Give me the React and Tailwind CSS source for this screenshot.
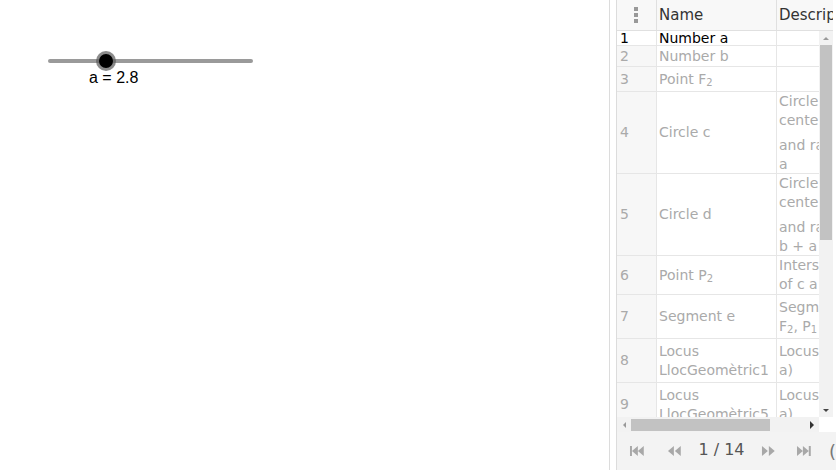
import React from "react";

const dim = "text-[#aaaaaa]";

const rows = [
  { n: "1", h: "h-[15px]", name: <span className="text-black">Number a</span>, desc: null, active: true },
  { n: "2", h: "h-[21px]", name: "Number b", desc: null },
  { n: "3", h: "h-[25px]", name: <>Point F<sub className="text-[10px]">2</sub></>, desc: null },
  {
    n: "4",
    h: "h-[82px]",
    name: "Circle c",
    desc: ["Circle", "cente", "and ra", "a"],
  },
  {
    n: "5",
    h: "h-[82px]",
    name: "Circle d",
    desc: ["Circle", "cente", "and ra", "b + a"],
  },
  { n: "6", h: "h-[39px]", name: <>Point P<sub className="text-[10px]">2</sub></>, desc: ["Inters", "of c a"] },
  {
    n: "7",
    h: "h-[44px]",
    name: "Segment e",
    desc: ["Segm", <>F<sub className="text-[10px]">2</sub>, P<sub className="text-[10px]">1</sub></>],
  },
  { n: "8", h: "h-[44px]", name: ["Locus", "LlocGeomètric1"], desc: ["Locus", "a)"] },
  { n: "9", h: "h-[44px]", name: ["Locus", "LlocGeomètric5"], desc: ["Locus", "a)"] },
];

const Row = ({ r }) => (
  <div className={`flex ${r.h} border-b border-[#e6e6e6] shrink-0`}>
    <div
      className={`w-[40px] shrink-0 border-r border-[#e6e6e6] bg-[#f7f7f7] flex items-center pl-[3px] ${
        r.active ? "text-black bg-white items-start leading-[15px]" : dim
      }`}
    >
      {r.n}
    </div>
    <div className={`w-[120px] shrink-0 border-r border-[#e6e6e6] flex flex-col justify-center pl-[2px] ${dim} leading-[19px] whitespace-nowrap overflow-hidden`}>
      {Array.isArray(r.name) ? r.name.map((l, i) => <div key={i}>{l}</div>) : <div className={r.active ? "leading-[15px]" : ""}>{r.name}</div>}
    </div>
    <div className={`flex-1 flex flex-col justify-center pl-[2px] ${dim} leading-[19px] whitespace-nowrap overflow-hidden`}>
      {r.desc &&
        r.desc.map((l, i) => (
          <div key={i} className={i === 2 && r.desc.length === 4 ? "mt-[6px]" : ""}>
            {l}
          </div>
        ))}
    </div>
  </div>
);

const NavIcon = ({ d }) => (
  <svg width="18" height="12" viewBox="0 0 18 12" className="fill-[#a8a8a8]">
    <path d={d} />
  </svg>
);

export default function App() {
  return (
    <div className="w-[836px] h-[470px] flex bg-white overflow-hidden font-['DejaVu_Sans',sans-serif] text-[14px]">
      {/* graphics view */}
      <div className="relative w-[610px] shrink-0 border-r border-[#dcdcdc]">
        <div className="absolute left-[48px] top-[59px] w-[205px] h-[4px] rounded-full bg-[#9a9a9a]" />
        <div className="absolute left-[96px] top-[51px] w-[20px] h-[20px] rounded-full bg-[#5a5a5a]/70 flex items-center justify-center">
          <div className="w-[14px] h-[14px] rounded-full bg-black" />
        </div>
        <div className="absolute left-[89px] top-[68px] font-['Liberation_Sans',sans-serif] text-[16px] leading-[20px] text-black">
          a = 2.8
        </div>
      </div>
      <div className="w-[7px] shrink-0 border-r border-[#dcdcdc]" />

      {/* spreadsheet */}
      <div className="flex-1 flex flex-col min-w-0">
        <div className="h-[432px] flex flex-col pr-[3px]">
          <div className="h-[31px] shrink-0 flex bg-[#f8f8f8] border-b border-[#e0e0e0] text-[#333] text-[15px]">
            <div className="w-[40px] shrink-0 border-r border-[#e0e0e0] flex flex-col items-center justify-center gap-[2px] pr-[2px]">
              <div className="w-[4px] h-[4px] bg-[#999]" />
              <div className="w-[4px] h-[4px] bg-[#999]" />
              <div className="w-[4px] h-[4px] bg-[#999]" />
            </div>
            <div className="w-[120px] shrink-0 border-r border-[#e0e0e0] flex items-center pl-[2px]">Name</div>
            <div className="flex-1 flex items-center pl-[2px] whitespace-nowrap overflow-hidden">Description</div>
          </div>
          <div className="flex-1 flex min-h-0">
            <div className="flex-1 flex flex-col overflow-hidden min-w-0">
              {rows.map((r) => (
                <Row key={r.n} r={r} />
              ))}
            </div>
            {/* vertical scrollbar */}
            <div className="w-[14px] shrink-0 bg-[#f2f2f2] flex flex-col items-center">
              <div className="h-[14px] flex items-center justify-center">
                <div className="w-0 h-0 border-l-[3px] border-r-[3px] border-b-[3px] border-l-transparent border-r-transparent border-b-[#999]" />
              </div>
              <div className="w-[12px] h-[195px] bg-[#c2c2c2]" />
              <div className="flex-1" />
              <div className="h-[14px] flex items-center justify-center">
                <div className="w-0 h-0 border-l-[3px] border-r-[3px] border-t-[3px] border-l-transparent border-r-transparent border-t-[#444]" />
              </div>
            </div>
          </div>
          {/* horizontal scrollbar */}
          <div className="h-[15px] shrink-0 flex">
            <div className="flex-1 bg-[#f2f2f2] flex items-center">
              <div className="w-[14px] flex justify-center">
                <div className="w-0 h-0 border-t-[3px] border-b-[3px] border-r-[3px] border-t-transparent border-b-transparent border-r-[#999]" />
              </div>
              <div className="w-[139px] h-[12px] bg-[#c2c2c2]" />
              <div className="flex-1" />
              <div className="w-[14px] flex justify-center">
                <div className="w-0 h-0 border-t-[4px] border-b-[4px] border-l-[4px] border-t-transparent border-b-transparent border-l-[#333]" />
              </div>
            </div>
            <div className="w-[14px] bg-white" />
          </div>
        </div>
        {/* navigation bar */}
        <div className="flex-1 bg-[#f3f3f3] flex items-center pl-[12px] gap-[19px] text-[#555] whitespace-nowrap">
          <NavIcon d="M1 1h2v10H1zM3 6l6-5v10zM9 6l6-5v10z" />
          <NavIcon d="M2 6l6-5v10zM9 6l6-5v10z" />
          <span className="text-[16px] -mx-[4px] -mt-[2px]">1 / 14</span>
          <NavIcon d="M2 1l6 5-6 5zM9 1l6 5-6 5z" />
          <NavIcon d="M1 1l6 5-6 5zM7 1l6 5-6 5zM13 1h2v10h-2z" />
          <span className="text-[18px] -ml-[4px] text-[#777]">(</span>
        </div>
      </div>
    </div>
  );
}
